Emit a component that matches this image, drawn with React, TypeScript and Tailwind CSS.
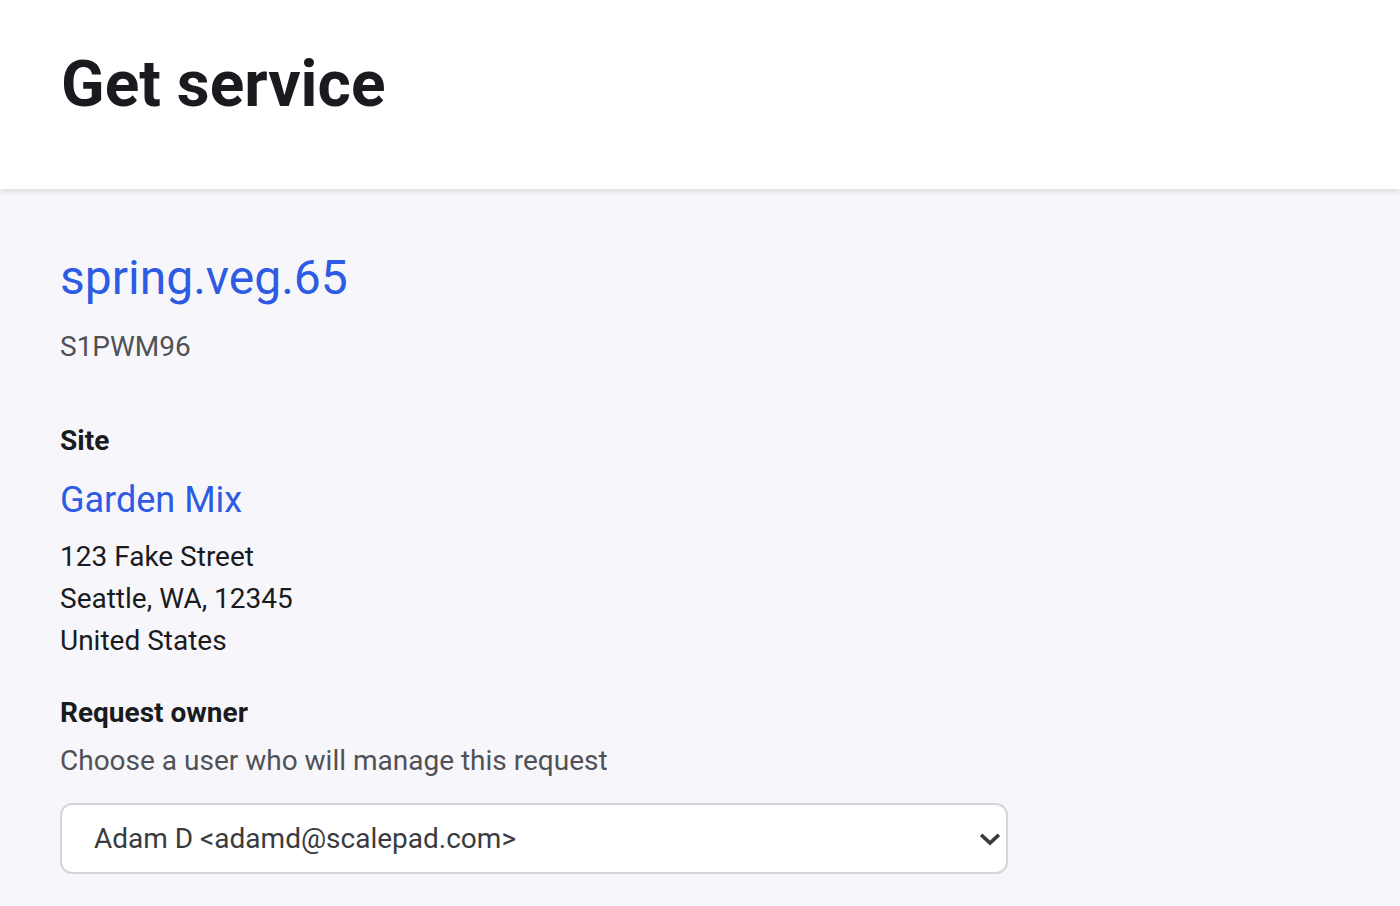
export default function App() {
  return (
    <div className="min-h-screen bg-[#f7f7fb] font-['Roboto',sans-serif]">
      {/* Header */}
      <header className="h-[189px] bg-white pl-[61px] pt-[53px] shadow-[0_2px_6px_rgba(0,0,0,0.12)] relative">
        <h1 className="text-[64px] leading-none font-bold text-[#1a1b1f]">Get service</h1>
      </header>

      <main className="pl-[60px] pt-[65px]">
        <a href="#" className="block text-[48px] leading-none text-[#2d5be3]">spring.veg.65</a>
        <p className="mt-[31px] text-[28px] leading-none text-[#505156]">S1PWM96</p>

        <h2 className="mt-[66px] text-[28px] leading-none font-bold text-[#1a1b1f]">Site</h2>
        <a href="#" className="block mt-[27px] text-[36px] leading-none text-[#2d5be3]">Garden Mix</a>
        <div className="mt-[18px] text-[28px] leading-[42px] text-[#1a1b1f]">
          <div>123 Fake Street</div>
          <div>Seattle, WA, 12345</div>
          <div>United States</div>
        </div>

        <h2 className="mt-[37px] text-[28px] leading-none font-bold text-[#1a1b1f]">Request owner</h2>
        <p className="mt-[20px] text-[28px] leading-none text-[#505156]">Choose a user who will manage this request</p>

        <div className="mt-[28px] w-[948px] h-[71px] bg-white border-2 border-[#d4d5da] rounded-[12px] flex items-center justify-between pl-[32px] pr-[6px]">
          <span className="text-[28px] leading-none text-[#3a3b40]">Adam D &lt;adamd@scalepad.com&gt;</span>
          <svg width="20" height="14" viewBox="0 0 20 14">
            <path d="M2.5 4 L10 11 L17.5 4" fill="none" stroke="#3a3b40" strokeWidth="3.6" strokeLinecap="square" />
          </svg>
        </div>
      </main>
    </div>
  );
}
